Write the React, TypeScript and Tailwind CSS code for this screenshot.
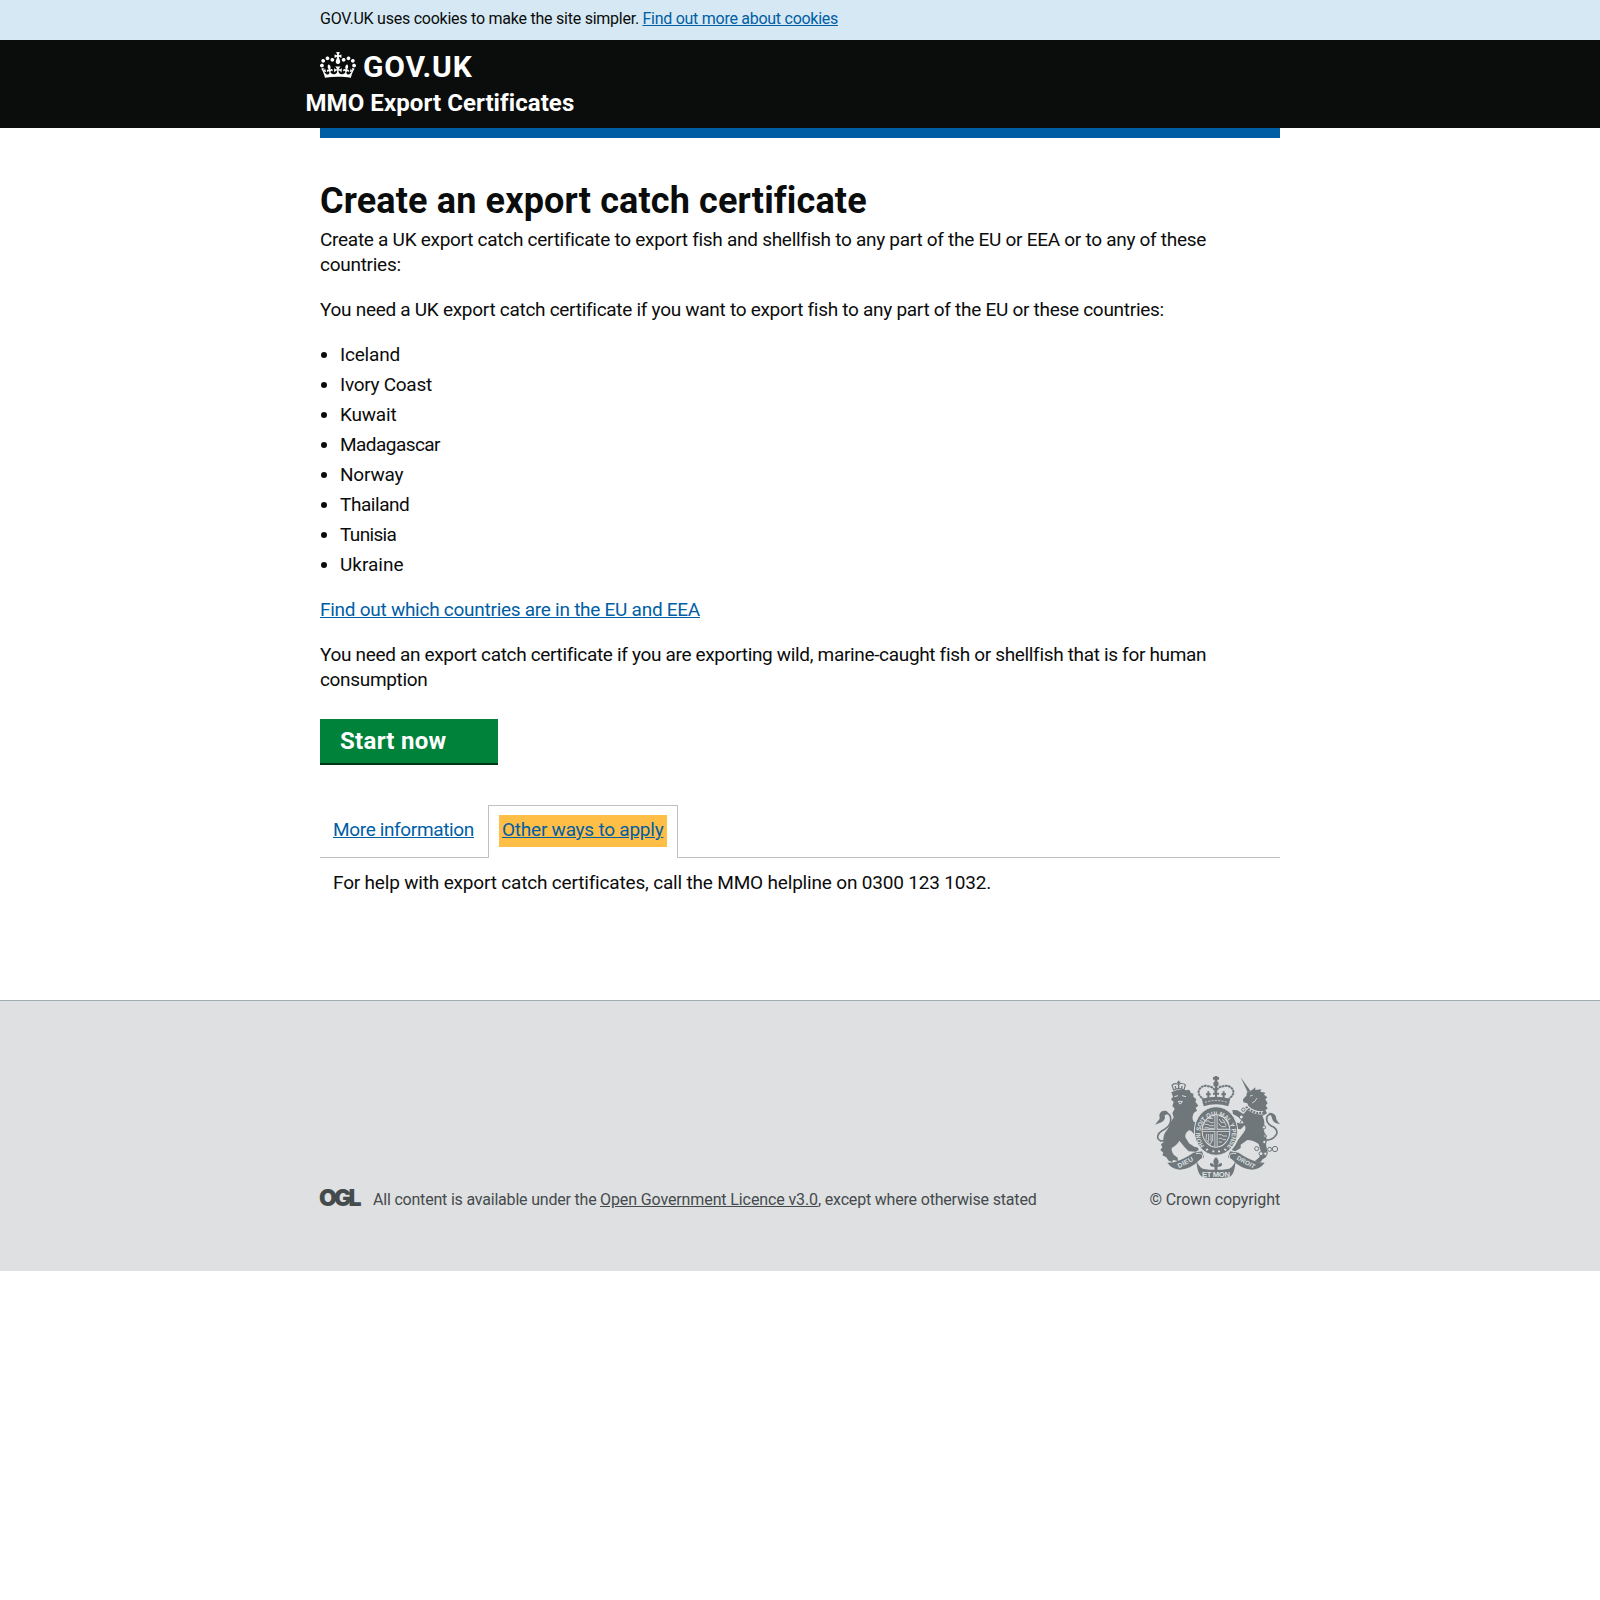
import type { ReactNode } from "react";

const countries: { name: string; spacing: string }[] = [
  { name: "Iceland", spacing: "tracking-[-0.2px]" },
  { name: "Ivory Coast", spacing: "tracking-[-0.28px]" },
  { name: "Kuwait", spacing: "tracking-[-0.2px]" },
  { name: "Madagascar", spacing: "tracking-[-0.55px]" },
  { name: "Norway", spacing: "tracking-[-0.2px]" },
  { name: "Thailand", spacing: "tracking-[-0.45px]" },
  { name: "Tunisia", spacing: "tracking-[-0.65px]" },
  { name: "Ukraine", spacing: "tracking-[0px]" },
];

function Container({ children, className = "" }: { children: ReactNode; className?: string }) {
  return <div className={`mx-auto w-[960px] ${className}`}>{children}</div>;
}

function Crown() {
  return (
    <svg viewBox="0 0 132 97" className="h-[26px] w-9 shrink-0 fill-white" preserveAspectRatio="none" aria-hidden="true">
      <path
        fillRule="evenodd"
        d="M25 30.2c3.5 1.5 7.7-.2 9.1-3.7 1.5-3.6-.2-7.8-3.9-9.2-3.6-1.4-7.6.3-9.1 3.9-1.4 3.5.3 7.5 3.9 9zM9 39.5c3.6 1.5 7.8-.2 9.2-3.7 1.5-3.6-.2-7.8-3.9-9.1-3.6-1.5-7.6.2-9.1 3.8-1.4 3.5.3 7.5 3.8 9zM4.4 57.2c3.5 1.5 7.7-.2 9.1-3.8 1.5-3.6-.2-7.7-3.9-9.1-3.5-1.5-7.6.3-9.1 3.8-1.4 3.5.3 7.6 3.9 9.1zm38.3-21.4c3.5 1.5 7.7-.2 9.1-3.8 1.5-3.6-.2-7.7-3.9-9.1-3.6-1.5-7.6.3-9.1 3.8-1.3 3.6.4 7.7 3.9 9.1zm64.4-5.6c-3.6 1.5-7.8-.2-9.1-3.7-1.5-3.6.2-7.8 3.8-9.2 3.6-1.4 7.7.3 9.2 3.9 1.3 3.5-.4 7.5-3.9 9zm15.9 9.3c-3.6 1.5-7.7-.2-9.1-3.7-1.5-3.6.2-7.8 3.7-9.1 3.6-1.5 7.7.2 9.2 3.8 1.5 3.5-.3 7.5-3.8 9zm4.7 17.7c-3.6 1.5-7.8-.2-9.2-3.8-1.5-3.6.2-7.7 3.9-9.1 3.6-1.5 7.7.3 9.2 3.8 1.3 3.5-.4 7.6-3.9 9.1zM89.3 35.8c-3.6 1.5-7.8-.2-9.2-3.8-1.4-3.6.2-7.7 3.9-9.1 3.6-1.5 7.7.3 9.2 3.8 1.4 3.6-.3 7.7-3.9 9.1zM69.7 17.7l8.9 4.7V9.3l-8.9 2.8c-.2-.3-.5-.6-.9-.9L72.4 0H59.6l3.5 11.2c-.3.3-.6.5-.9.9l-8.8-2.8v13.1l8.8-4.7c.3.3.6.7.9.9l-5 15.4v.1c-.2.8-.4 1.6-.4 2.4 0 4.1 3.1 7.5 7 8.1h.2c.3 0 .7.1 1 .1.4 0 .7 0 1-.1h.2c4-.6 7.1-4.1 7.1-8.1 0-.8-.1-1.7-.4-2.4V34l-5.1-15.4c.4-.2.7-.6 1-.9zM66 92.8c16.9 0 32.8 1.1 47.1 3.2 4-16.9 8.9-26.7 14-33.5l-9.6-3.4c1 4.9 1.1 7.2 0 10.2-1.5-1.4-3-4.3-4.2-8.7L108.6 76c2.8-2 5-3.2 7.5-3.3-4.4 9.4-10 11.9-13.6 11.2-4.3-.8-6.3-4.6-5.6-7.9 1-4.7 5.7-5.9 8-.5 4.3-8.7-3-11.4-7.6-8.8 7.1-7.2 7.9-13.5 2.1-21.1-8 6.1-8.1 12.3-4.5 20.8-4.7-5.4-12.1-2.5-9.5 6.2 3.4-5.2 7.9-2 7.2 3.1-.6 4.3-6.4 7.8-13.5 7.2-10.3-.9-10.9-8-11.2-13.8 2.5-.5 7.1 1.8 11 7.3L80.2 60c-4.1 4.4-8 5.3-12.3 5.4 1.4-4.4 8-11.6 8-11.6H55.5s6.4 7.2 7.9 11.6c-4.2-.1-8-1-12.3-5.4l1.4 16.4c3.9-5.5 8.5-7.7 10.9-7.3-.3 5.8-.9 12.8-11.1 13.8-7.2.6-12.9-2.9-13.5-7.2-.7-5 3.8-8.3 7.1-3.1 2.7-8.7-4.6-11.6-9.4-6.2 3.7-8.5 3.6-14.7-4.6-20.8-5.8 7.6-5 13.9 2.2 21.1-4.7-2.6-11.9.1-7.7 8.8 2.3-5.5 7.1-4.2 8.1.5.7 3.3-1.3 7.1-5.7 7.9-3.5.7-9-1.8-13.5-11.2 2.5.1 4.7 1.3 7.5 3.3l-4.7-15.4c-1.2 4.4-2.7 7.2-4.3 8.7-1.1-3-.9-5.3 0-10.2l-9.5 3.4c5 6.9 9.9 16.7 14 33.5 14.8-2.1 30.8-3.2 47.7-3.2z"
      />
    </svg>
  );
}

const INK = "#6f777b";
const PAPER = "#dee0e2";

function RoyalArms() {
  return (
    <svg viewBox="75 48 375 306" className="h-[102px] w-[125px]" fill="none" aria-hidden="true">
      {/* ribbon */}
      <g fill={INK}>
        <path d="M112 308 L132 307 Q165 296 190 278 L216 274 L222 292 L208 300 Q185 326 150 329 Q125 327 112 308 Z" />
        <path d="M404 308 L384 307 Q351 296 326 278 L300 274 L294 292 L308 300 Q331 326 366 329 Q391 327 404 308 Z" />
        <path d="M199 300 Q202 350 222 352 Q258 357 294 352 Q314 350 317 300 Q311 320 298 326 Q258 333 218 326 Q205 320 199 300 Z" />
      </g>
      <path d="M198 281 Q214 277 218 287 Q220 297 210 300 M318 281 Q302 277 298 287 Q296 297 306 300" stroke={PAPER} strokeWidth="3" />
      <g fill={PAPER} fontFamily="Liberation Sans" fontWeight="700" textAnchor="middle">
        <text x="169" y="313" fontSize="20" transform="rotate(-28 169 313)" textLength="50">DIEU</text>
        <text x="258" y="350" fontSize="23" textLength="84">ET MON</text>
        <text x="345" y="312" fontSize="19" transform="rotate(29 345 312)" textLength="60">DROIT</text>
      </g>
      <path d="M258 291 Q272 304 262 316 Q278 302 276 316 Q272 322 263 320 L262 330 H254 L253 320 Q244 322 240 316 Q238 302 254 316 Q244 304 258 291 Z" fill={INK} />

      {/* lion */}
      <path
        fill={INK}
        d="M124 97 Q146 84 169 91 L178 89 L182 98 L190 101 L190 110 L199 118 L196 125 L205 137 L197 143 L201 152 L192 158 Q184 172 190 184 L208 196 L204 204 L214 214 L204 218 L204 230 L194 224 L184 213 L177 211 Q164 220 166 232 L177 250 L194 261 Q206 260 206 270 L198 275 L176 274 L164 262 L148 242 Q142 254 126 263 Q122 270 131 284 L143 293 L144 303 L130 300 L126 306 L116 302 L109 292 L97 286 L100 278 L91 270 L97 262 L93 253 L101 246 Q97 226 111 210 Q119 200 123 186 L131 172 L127 160 L134 146 L127 138 L131 126 L123 118 L129 110 Z"
      />
      <path d="M133 110 L144 107 M156 107 L168 110 M145 124 L157 124 L153 131 H149 Z" stroke={PAPER} strokeWidth="3" />
      <path d="M104 240 Q90 248 83 234 Q82 218 104 208 Q128 194 121 169 Q116 157 103 162" stroke={INK} strokeWidth="5" />
      <path d="M110 153 Q92 150 88 164 L89 176 L75 194 L96 186 Q108 178 104 166 L116 160 Z" fill={INK} />
      <path d="M131 90 L126 76 Q132 67 145 73 Q158 67 166 75 L162 90 Q146 82 131 90 Z" stroke={INK} strokeWidth="3.5" />
      <path d="M146 62 V86 M141 67 H151 M136 78 L137 86 M156 78 L155 86" stroke={INK} strokeWidth="4" />

      {/* unicorn */}
      <path d="M332 52 L353 97 L361 92 Z" fill={INK} />
      <path
        fill={INK}
        d="M350 98 L366 90 L376 82 L376 90 L394 88 L391 95 L406 98 L402 104 L412 112 L406 118 L413 130 L407 136 L413 146 L406 150 L411 160 L397 168 Q406 184 402 200 Q399 212 408 226 Q412 240 408 254 L413 278 L408 292 L398 298 L390 308 L374 304 L388 292 L393 276 L386 252 Q370 240 352 240 L332 254 L332 264 L316 274 L305 270 L316 256 L324 240 L342 216 Q350 206 344 196 L332 208 L319 206 L314 190 L324 188 L334 192 L338 184 L326 172 L309 162 L307 150 L322 151 L340 162 L348 154 L356 140 L352 130 L340 127 L339 118 L350 106 Z"
      />
      <path d="M350 140 Q372 162 400 158" stroke={PAPER} strokeWidth="10" />
      <path d="M348 140 Q372 164 402 158" stroke={INK} strokeWidth="6" strokeDasharray="6 3" />
      <path d="M360 108 L368 106 M381 114 Q376 126 366 129" stroke={PAPER} strokeWidth="2.5" />
      <path d="M404 240 Q430 242 440 222 Q444 206 424 198 Q406 186 411 170 Q418 158 430 166" stroke={INK} strokeWidth="5" />
      <path d="M416 158 Q436 158 438 172 Q438 182 450 192 Q432 190 428 180 L424 168 Z" fill={INK} />
      <g stroke={INK} strokeWidth="3" fill={PAPER}>
        <circle cx="340" cy="149" r="5" />
        <circle cx="334" cy="171" r="6" />
        <circle cx="336" cy="187" r="5" />
        <circle cx="402" cy="202" r="5" />
        <circle cx="405" cy="228" r="4" />
        <circle cx="403" cy="246" r="5" />
        <circle cx="380" cy="266" r="6" />
        <circle cx="393" cy="281" r="6" />
        <circle cx="406" cy="281" r="5" />
        <circle cx="419" cy="268" r="6" />
        <circle cx="435" cy="267" r="8" />
      </g>

      {/* garter and shield */}
      <ellipse cx="258" cy="213" rx="65" ry="73" fill={INK} stroke={PAPER} strokeWidth="3" />
      <ellipse cx="258" cy="213" rx="43" ry="50" fill={PAPER} />
      <ellipse cx="258" cy="213" rx="40" ry="47" fill={INK} />
      <path id="garter" d="M223 258 A47 54 0 1 1 293 258" />
      <text fill={PAPER} fontFamily="Liberation Sans" fontWeight="700" fontSize="20" letterSpacing="-0.5">
        <textPath href="#garter" textLength="240" lengthAdjust="spacingAndGlyphs">HONI SOIT QUI MAL Y PENSE</textPath>
      </text>
      <path d="M218 211 H298 M258 166 V260" stroke={PAPER} strokeWidth="9" />
      <path d="M218 211 H298 M258 166 V260" stroke={INK} strokeWidth="4" />
      <path
        d="M227 183 h10 l4 5 h10 M224 193 h10 l5 4 h12 M224 203 h9 l5 2 h13 M233 175 h16 M268 177 l5 10 h10 l6 10 M266 190 l8 10 h14 M276 178 l10 8 M266 224 h9 l4 4 h12 M266 235 h9 l4 4 h9 M266 246 h10 M230 222 L228 238 L240 254 L248 240 V222 M236 222 V244 M243 222 V244"
        stroke={PAPER}
        strokeWidth="2.5"
      />
      <path d="M228 271 l6 -4 M247 274 h6 M264 274 h6 M283 267 l6 4" stroke={PAPER} strokeWidth="5" />

      {/* crown */}
      <path
        d="M222 132 L218 115 Q202 104 207 90 Q218 70 246 82 Q256 88 257 100 Q258 88 268 82 Q298 70 309 90 Q314 104 298 115 L294 132"
        stroke={INK}
        strokeWidth="6"
        strokeDasharray="8 1.5"
      />
      <path d="M217 116 Q258 104 299 116 L295 139 Q258 127 221 139 Z" fill={INK} />
      <path d="M225 127 Q258 116 291 127" stroke={PAPER} strokeWidth="2.5" strokeDasharray="6 4" />
      <path d="M258 66 V114 M235 94 V116 M281 94 V116 M228 103 H242 M274 103 H288 M249 101 H267" stroke={INK} strokeWidth="6" />
      <circle cx="258" cy="72" r="8" fill={INK} />
      <path d="M258 48 V66 M249 55 H267" stroke={INK} strokeWidth="8" />
    </svg>
  );
}

export default function App() {
  return (
    <div className="min-h-[1600px] bg-white font-[Roboto,sans-serif] text-[#0b0c0c]">
      <div className="h-10 bg-[#d5e8f3]">
        <Container className="flex pt-[8px] text-base leading-[21px] whitespace-nowrap">
          <p className="w-[322.5px] tracking-[-0.24px]">GOV.UK uses cookies to make the site simpler.</p>
          <a href="#" className="tracking-[-0.27px] text-[#005ea5] underline underline-offset-1">Find out more about cookies</a>
        </Container>
      </div>

      <header className="h-[88px] bg-[#0b0c0c] text-white">
        <Container className="pt-3">
          <a href="#" className="flex h-[30px] items-start">
            <Crown />
            <span className="-mt-[2px] ml-[7px] text-[30px] leading-[34px] font-bold tracking-[0.8px]">GOV.UK</span>
          </a>
          <p className="mt-[6px] -ml-[14.5px] text-2xl leading-[30px] font-bold tracking-[0.08px]">MMO Export Certificates</p>
        </Container>
      </header>

      <Container>
        <div className="h-2.5 bg-[#005ea5]" />
        <main className="text-[19px] leading-[25px]">
          <h1 className="pt-[43px] text-4xl leading-[40px] font-bold tracking-[0.15px]">Create an export catch certificate</h1>
          <p className="mt-[6px] tracking-[-0.277px]">
            Create a UK export catch certificate to export fish and shellfish to any part of the EU or EEA or to any of these
            <br />
            countries:
          </p>
          <p className="mt-5 tracking-[-0.285px]">
            You need a UK export catch certificate if you want to export fish to any part of the EU or these countries:
          </p>
          <ul className="mt-5 flex list-disc flex-col gap-[5px] pl-5">
            {countries.map((c) => (
              <li key={c.name} className={c.spacing}>{c.name}</li>
            ))}
          </ul>
          <p className="mt-5">
            <a href="#" className="tracking-[-0.264px] text-[#005ea5] underline underline-offset-1">Find out which countries are in the EU and EEA</a>
          </p>
          <p className="mt-5 tracking-[-0.33px]">
            You need an export catch certificate if you are exporting wild, marine-caught fish or shellfish that is for human
            <br />
            consumption
          </p>
          <button className="mt-[27px] block h-[46px] w-[178px] border-b-2 border-[#003618] bg-[#00823b] pl-5 text-left text-2xl leading-[44px] font-bold tracking-[0.3px] text-white">
            Start now
          </button>

          <div className="mt-10 flex h-[53px]">
            <div className="w-[168px] border-b border-[#bfc1c3] pt-[12px] pl-[13px]">
              <a href="#" className="tracking-[-0.353px] whitespace-nowrap text-[#005ea5] underline underline-offset-1">More information</a>
            </div>
            <div className="w-[190px] border border-b-0 border-[#bfc1c3] pt-[9px] pl-[10px]">
              <a href="#" className="block h-8 w-[168px] bg-[#ffbf47] pt-[2px] pl-[3px] tracking-[-0.23px] whitespace-nowrap text-[#005ea5] underline underline-offset-1">
                Other ways to apply
              </a>
            </div>
            <div className="flex-1 border-b border-[#bfc1c3]" />
          </div>
          <p className="mt-[12px] pl-[13px] tracking-[-0.177px]">
            For help with export catch certificates, call the MMO helpline on 0300 123 1032.
          </p>
        </main>
      </Container>

      <footer className="mt-[105px] h-[271px] border-t border-[#a1acb2] bg-[#dee0e2] text-base leading-5 text-[#454a4c]">
        <Container className="flex items-end justify-between pt-[75px]">
          <div className="flex items-end whitespace-nowrap">
            <span className="w-[53px]">
              <span className="mb-[2px] -ml-px block h-[20px] font-[Inter,sans-serif] text-[23px] leading-[20px] font-black tracking-[-2.9px]">OGL</span>
            </span>
            <p className="flex">
              <span className="w-[227px] tracking-[-0.2px]">All content is available under the</span>
              <a href="#" className="w-[218px] tracking-[-0.112px] underline underline-offset-1">Open Government Licence v3.0</a>
              <span className="tracking-[-0.185px]">, except where otherwise stated</span>
            </p>
          </div>
          <div className="flex flex-col items-end">
            <RoyalArms />
            <p className="mt-[12px] tracking-[-0.117px]">© Crown copyright</p>
          </div>
        </Container>
      </footer>
    </div>
  );
}
